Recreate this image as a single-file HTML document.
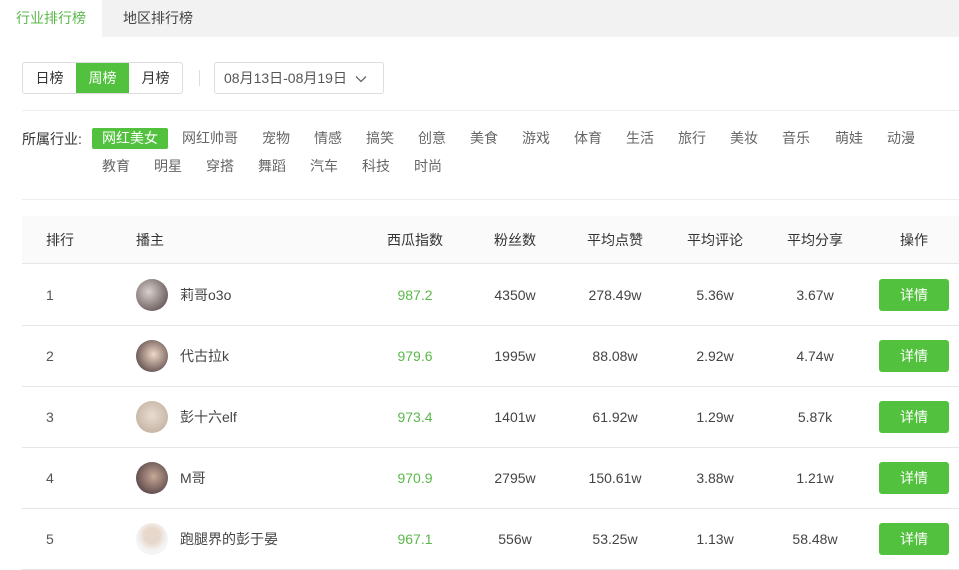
<!DOCTYPE html>
<html><head><meta charset="utf-8"><style>
*{margin:0;padding:0;box-sizing:border-box}
body{width:959px;height:566px;overflow:hidden;background:#fff;font-family:"Liberation Sans","Noto Sans CJK SC",sans-serif;color:#444;font-size:14px;position:relative}
.tabs{position:absolute;left:0;top:0;width:959px;height:37px;background:#f2f2f2}
.tab{position:absolute;top:0;height:37px;line-height:37px;font-size:14px;color:#444}
.t1{left:0;width:102px;background:#fff;color:#5bb84a;text-align:center}
.t2{left:123px}
.seg{position:absolute;left:22px;top:62px;height:32px;border:1px solid #ddd;border-radius:3px;display:flex;overflow:hidden}
.seg div{width:53px;line-height:30px;text-align:center;color:#333}
.seg .on{background:#52c13e;color:#fff}
.vline{position:absolute;left:199px;top:70px;width:1px;height:16px;background:#ddd}
.date{position:absolute;left:214px;top:62px;width:170px;height:32px;border:1px solid #ddd;border-radius:3px;line-height:30px;padding-left:9px;color:#555}
.hr{position:absolute;left:22px;width:937px;height:1px;background:#eee}
.lab{position:absolute;left:22px;top:129px;color:#333}
.cat{position:absolute;height:21px;line-height:21px;color:#666;padding:0 10px}
.cat.on{background:#52c13e;color:#fff;border-radius:2px}
.th{position:absolute;left:22px;top:216px;width:937px;height:48px;background:#fafafa;border-bottom:1px solid #e6e6e6;color:#333}
.row{position:absolute;left:22px;width:937px;height:61px;border-bottom:1px solid #e6e6e6}
.c{position:absolute;top:0;line-height:48px;white-space:nowrap}
.row .c{line-height:60px}
.ctr{transform:translateX(-50%)}
.g{color:#5bb84a}
.av{position:absolute;left:114px;top:14px;width:32px;height:32px;border-radius:50%}
.btn{position:absolute;left:857px;top:14px;width:70px;height:32px;background:#52c13e;border-radius:3px;color:#fff;text-align:center;line-height:32px}
</style></head><body>
<div class="tabs"><div class="tab t1">行业排行榜</div><div class="tab t2">地区排行榜</div></div>
<div class="seg"><div>日榜</div><div class="on">周榜</div><div>月榜</div></div>
<div class="vline"></div>
<div class="date">08月13日-08月19日 <svg width="12" height="8" style="margin-left:4px" viewBox="0 0 12 8"><path d="M1 1.5l5 5 5-5" fill="none" stroke="#666" stroke-width="1.3"/></svg></div>
<div class="hr" style="top:110px"></div>
<div class="lab">所属行业:</div>
<div class="cat on" style="left:92px;top:128px">网红美女</div>
<div class="cat" style="left:172px;top:128px">网红帅哥</div>
<div class="cat" style="left:252px;top:128px">宠物</div>
<div class="cat" style="left:304px;top:128px">情感</div>
<div class="cat" style="left:356px;top:128px">搞笑</div>
<div class="cat" style="left:408px;top:128px">创意</div>
<div class="cat" style="left:460px;top:128px">美食</div>
<div class="cat" style="left:512px;top:128px">游戏</div>
<div class="cat" style="left:564px;top:128px">体育</div>
<div class="cat" style="left:616px;top:128px">生活</div>
<div class="cat" style="left:668px;top:128px">旅行</div>
<div class="cat" style="left:720px;top:128px">美妆</div>
<div class="cat" style="left:772px;top:128px">音乐</div>
<div class="cat" style="left:825px;top:128px">萌娃</div>
<div class="cat" style="left:877px;top:128px">动漫</div>
<div class="cat" style="left:92px;top:156px">教育</div>
<div class="cat" style="left:144px;top:156px">明星</div>
<div class="cat" style="left:196px;top:156px">穿搭</div>
<div class="cat" style="left:248px;top:156px">舞蹈</div>
<div class="cat" style="left:300px;top:156px">汽车</div>
<div class="cat" style="left:352px;top:156px">科技</div>
<div class="cat" style="left:404px;top:156px">时尚</div>
<div class="hr" style="top:199px"></div>
<div class="th">
<div class="c" style="left:24px">排行</div>
<div class="c" style="left:114px">播主</div>
<div class="c ctr" style="left:393px">西瓜指数</div>
<div class="c ctr" style="left:493px">粉丝数</div>
<div class="c ctr" style="left:593px">平均点赞</div>
<div class="c ctr" style="left:693px">平均评论</div>
<div class="c ctr" style="left:793px">平均分享</div>
<div class="c ctr" style="left:892px">操作</div>
</div>
<div class="row" style="top:265px"><div class="c" style="left:24px;color:#555">1</div><div class="av" style="background:radial-gradient(circle at 40% 40%,#d8d0cc,#4a3a3c)"></div><div class="c" style="left:158px">莉哥o3o</div><div class="c ctr g" style="left:393px">987.2</div><div class="c ctr" style="left:493px">4350w</div><div class="c ctr" style="left:593px">278.49w</div><div class="c ctr" style="left:693px">5.36w</div><div class="c ctr" style="left:793px">3.67w</div><div class="btn">详情</div></div>
<div class="row" style="top:326px"><div class="c" style="left:24px;color:#555">2</div><div class="av" style="background:radial-gradient(circle at 55% 45%,#f0d8c8,#3a2a2a)"></div><div class="c" style="left:158px">代古拉k</div><div class="c ctr g" style="left:393px">979.6</div><div class="c ctr" style="left:493px">1995w</div><div class="c ctr" style="left:593px">88.08w</div><div class="c ctr" style="left:693px">2.92w</div><div class="c ctr" style="left:793px">4.74w</div><div class="btn">详情</div></div>
<div class="row" style="top:387px"><div class="c" style="left:24px;color:#555">3</div><div class="av" style="background:radial-gradient(circle at 50% 45%,#eadcd0,#b8a898)"></div><div class="c" style="left:158px">彭十六elf</div><div class="c ctr g" style="left:393px">973.4</div><div class="c ctr" style="left:493px">1401w</div><div class="c ctr" style="left:593px">61.92w</div><div class="c ctr" style="left:693px">1.29w</div><div class="c ctr" style="left:793px">5.87k</div><div class="btn">详情</div></div>
<div class="row" style="top:448px"><div class="c" style="left:24px;color:#555">4</div><div class="av" style="background:radial-gradient(circle at 55% 45%,#c8a898,#3a2a30)"></div><div class="c" style="left:158px">M哥</div><div class="c ctr g" style="left:393px">970.9</div><div class="c ctr" style="left:493px">2795w</div><div class="c ctr" style="left:593px">150.61w</div><div class="c ctr" style="left:693px">3.88w</div><div class="c ctr" style="left:793px">1.21w</div><div class="btn">详情</div></div>
<div class="row" style="top:509px"><div class="c" style="left:24px;color:#555">5</div><div class="av" style="background:radial-gradient(circle at 50% 40%,#e8d8cc 30%,#f4f4f4 60%)"></div><div class="c" style="left:158px">跑腿界的彭于晏</div><div class="c ctr g" style="left:393px">967.1</div><div class="c ctr" style="left:493px">556w</div><div class="c ctr" style="left:593px">53.25w</div><div class="c ctr" style="left:693px">1.13w</div><div class="c ctr" style="left:793px">58.48w</div><div class="btn">详情</div></div>
</body></html>
